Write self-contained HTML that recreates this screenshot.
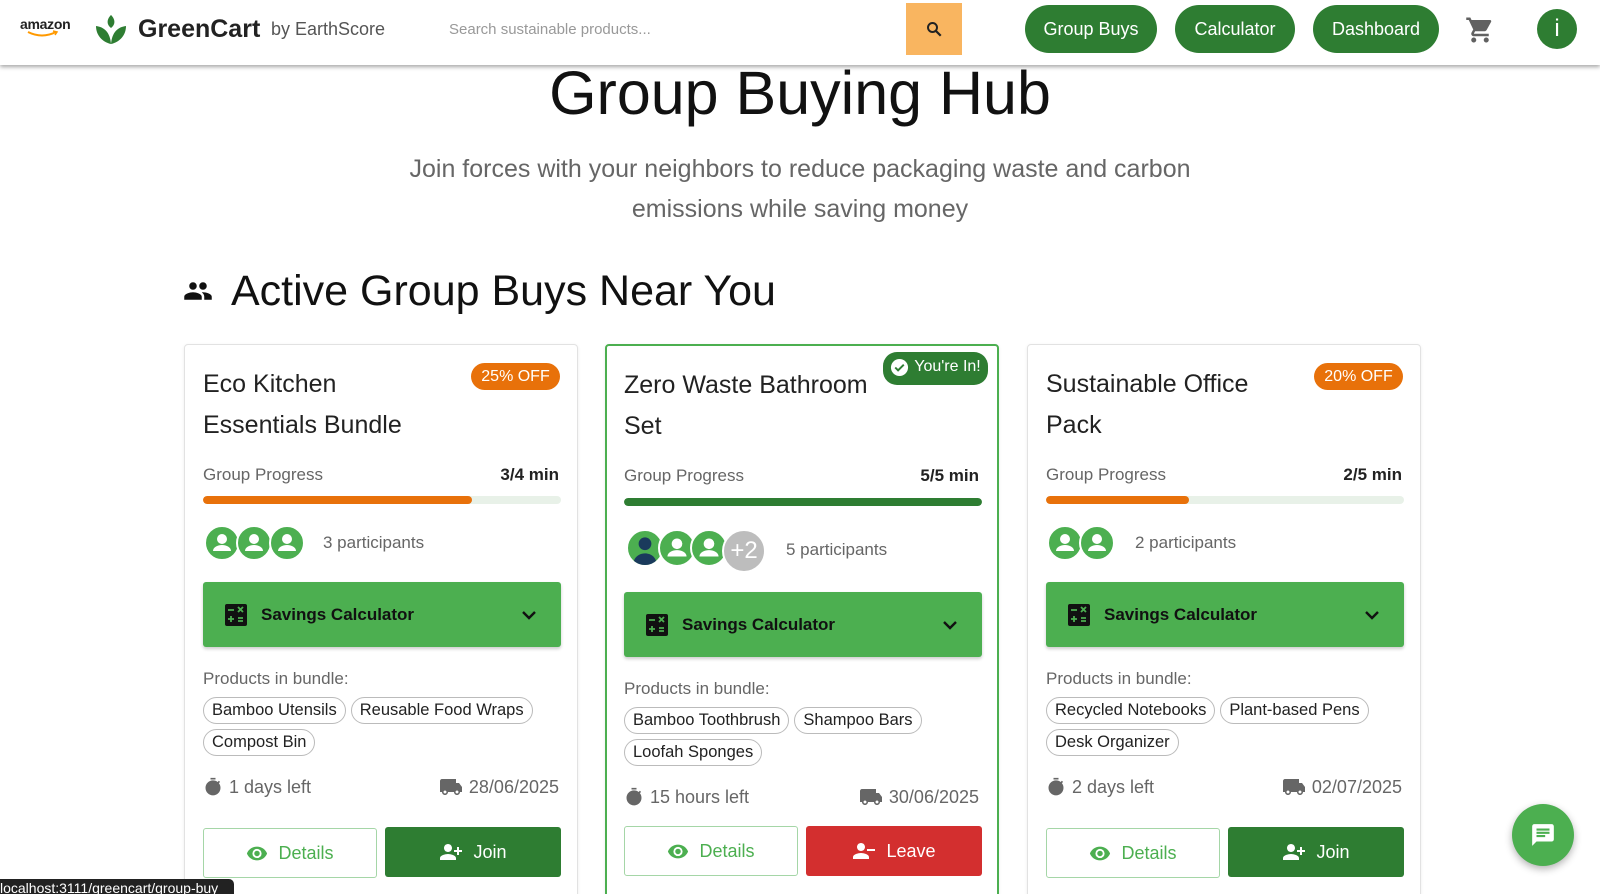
<!DOCTYPE html>
<html style="height:894px;overflow:hidden"><head><meta charset="utf-8"><style>
*{box-sizing:border-box;margin:0;padding:0}
body{width:1600px;height:894px;overflow:hidden;background:#fff;font-family:"Liberation Sans",Arial,sans-serif;color:#222;position:relative}
.a{position:absolute}
.nav{position:absolute;left:0;top:0;width:1600px;height:65px;background:#fff;box-shadow:0 2px 4px rgba(0,0,0,.35);z-index:5}
.nb{position:absolute;top:5px;height:48px;border-radius:24px;background:#2e7d32;color:#fff;font-size:18px;display:flex;align-items:center;justify-content:center}
.card{position:absolute;top:344px;width:394px;height:560px;border:1px solid #e2e2e2;border-radius:4px;background:#fff;box-shadow:0 1px 3px rgba(0,0,0,.08)}
.card.in{border:2px solid #4caf50}
.t{position:absolute;left:18px;top:19px;font-size:25px;line-height:41px;color:#222}
.badge{position:absolute;left:286px;top:18px;width:89px;height:27px;border-radius:14px;background:#e8710a;color:#fff;font-size:16px;display:flex;align-items:center;justify-content:center}
.gp{position:absolute;left:18px;right:18px;font-size:17px;color:#666;display:flex;justify-content:space-between}
.gp b{color:#222;font-size:17px}
.bar{position:absolute;left:18px;width:358px;height:8px;border-radius:4px;background:#e8f1e8;overflow:hidden}
.bar i{display:block;height:8px;border-radius:4px}
.av{position:absolute;width:36px;height:36px;border-radius:50%;background:#4caf50;border:2px solid #fff;overflow:hidden}
.pt{position:absolute;left:138px;font-size:17px;color:#666}
.sc{position:absolute;left:18px;width:358px;height:65px;background:#4caf50;border-radius:3px;box-shadow:0 2px 3px rgba(0,0,0,.2);font-weight:bold;font-size:17px;color:#111;display:flex;align-items:center}
.pb{position:absolute;left:18px;font-size:17px;color:#666}
.chips{position:absolute;left:18px;width:360px;display:flex;flex-wrap:wrap;gap:5px 5px}
.chip{height:27px;border:1px solid #bbb;border-radius:14px;padding:0 8px;font-size:16.5px;display:flex;align-items:center;color:#222}
.tl{position:absolute;left:18px;right:18px;font-size:18px;color:#666;display:flex;justify-content:space-between;align-items:center}
.tl span{display:flex;align-items:center;gap:6px}
.btn{position:absolute;height:50px;border-radius:3px;display:flex;align-items:center;justify-content:center;font-size:18px;gap:10px}
.det{left:18px;width:174px;border:1px solid #a5d6a7;color:#4caf50}
.join{left:200px;width:176px;background:#2e7d32;color:#fff}
</style></head><body>
<div class="nav">
  <div class="a" style="left:20px;top:16px;font-size:14px;font-weight:bold;color:#222;letter-spacing:-.3px">amazon</div>
  <svg class="a" style="left:26px;top:30px" width="34" height="8" viewBox="0 0 34 8"><path d="M2 2 Q16 9 30 2" stroke="#f90" stroke-width="2" fill="none"/><path d="M27 1 L31 2 L29 5" stroke="#f90" stroke-width="1.5" fill="none"/></svg>
  <svg class="a" style="left:94px;top:13px" width="34" height="32" viewBox="0 0 34 32"><path d="M17 2 C22 7 21 12 17 15 C13 12 12 7 17 2Z" fill="#2e7d32"/><path d="M17 31 C8 29 2 22 2 13 C10 14 16 19 17 31Z" fill="#2e7d32"/><path d="M17 31 C26 29 32 22 32 13 C24 14 18 19 17 31Z" fill="#2e7d32"/></svg>
  <div class="a" style="left:138px;top:15px;font-size:25px;font-weight:bold;color:#222">GreenCart</div>
  <div class="a" style="left:271px;top:19px;font-size:18px;color:#555">by EarthScore</div>
  <div class="a" style="left:449px;top:21px;font-size:15px;color:#999">Search sustainable products...</div>
  <div class="a" style="left:906px;top:3px;width:56px;height:52px;background:#f9b560;display:flex;align-items:center;justify-content:center">
    <svg width="18" height="18" viewBox="0 0 24 24"><circle cx="10" cy="10" r="6" stroke="#222" stroke-width="2.6" fill="none"/><path d="M14.5 14.5 L21 21" stroke="#222" stroke-width="3"/></svg></div>
  <div class="nb" style="left:1025px;width:132px">Group Buys</div>
  <div class="nb" style="left:1175px;width:120px">Calculator</div>
  <div class="nb" style="left:1313px;width:126px">Dashboard</div>
  <svg class="a" style="left:1465px;top:15px" width="30" height="30" viewBox="0 0 24 24"><path fill="#616161" d="M7 18c-1.1 0-2 .9-2 2s.9 2 2 2 2-.9 2-2-.9-2-2-2zM1 2v2h2l3.6 7.59-1.35 2.45c-.16.28-.25.61-.25.96 0 1.1.9 2 2 2h12v-2H7.42c-.14 0-.25-.11-.25-.25l.03-.12.9-1.63h7.45c.75 0 1.41-.41 1.75-1.03l3.58-6.49A1 1 0 0 0 20 4H5.21l-.94-2H1zm16 16c-1.1 0-2 .9-2 2s.9 2 2 2 2-.9 2-2-.9-2-2-2z"/></svg>
  <div class="a" style="left:1537px;top:9px;width:40px;height:40px;border-radius:50%;background:#2e7d32;color:#fff;font-size:24px;display:flex;align-items:center;justify-content:center">i</div>
</div>

<div class="a" style="left:0;width:1600px;top:58px;text-align:center;font-size:61px;color:#111">Group Buying Hub</div>
<div class="a" style="left:375px;width:850px;top:149px;text-align:center;font-size:25px;line-height:40px;color:#666">Join forces with your neighbors to reduce packaging waste and carbon emissions while saving money</div>

<svg class="a" style="left:183px;top:280px" width="30" height="22" viewBox="0 0 24 16"><path fill="#111" d="M16 7c1.66 0 2.99-1.34 2.99-3S17.66 1 16 1c-1.66 0-3 1.34-3 3s1.34 3 3 3zm-8 0c1.66 0 2.99-1.34 2.99-3S9.66 1 8 1C6.34 1 5 2.34 5 4s1.34 3 3 3zm0 2c-2.33 0-7 1.17-7 3.5V15h14v-2.5C15 10.17 10.33 9 8 9zm8 0c-.29 0-.62.02-.97.05 1.16.84 1.970 1.97 1.97 3.45V15h6v-2.5c0-2.33-4.67-3.5-7-3.5z"/></svg>
<div class="a" style="left:231px;top:267px;font-size:43px;color:#111">Active Group Buys Near You</div>

<svg width="0" height="0" style="position:absolute"><defs>
<symbol id="u" viewBox="0 0 32 32"><circle cx="16" cy="12" r="5" fill="#fff"/><path d="M7 24c0-4 5-6 9-6s9 2 9 6z" fill="#fff"/></symbol>
<symbol id="calc" viewBox="0 0 22 22"><rect width="22" height="22" rx="2" fill="#111"/><path d="M3 6h6M13 3l5 5M18 3l-5 5M3 15h6M6 12v6M13 14h5M13 17h5" stroke="#4caf50" stroke-width="1.8"/></symbol>
<symbol id="chev" viewBox="0 0 16 10"><path d="M2 2l6 6 6-6" stroke="#111" stroke-width="2.4" fill="none"/></symbol>
<symbol id="eye" viewBox="0 0 24 16"><path d="M12 1C7 1 2.7 4.1 1 8.5 2.7 12.9 7 16 12 16s9.3-3.1 11-7.5C21.3 4.1 17 1 12 1zm0 12.5a5 5 0 1 1 0-10 5 5 0 0 1 0 10zm0-8a3 3 0 1 0 0 6 3 3 0 0 0 0-6z" fill="#4caf50"/></symbol>
<symbol id="timer" viewBox="0 0 24 24"><path fill="#666" d="M9 1h6v2H9zM19.03 7.39l1.42-1.42c-.43-.51-.9-.99-1.41-1.41l-1.42 1.42A8.962 8.962 0 0 0 12 4c-4.97 0-9 4.03-9 9s4.02 9 9 9 9-4.03 9-9c0-2.12-.74-4.07-1.97-5.61z"/></symbol>
<symbol id="truck" viewBox="0 0 24 24"><path fill="#666" d="M20 8h-3V4H3c-1.1 0-2 .9-2 2v11h2c0 1.66 1.34 3 3 3s3-1.34 3-3h6c0 1.66 1.34 3 3 3s3-1.34 3-3h2v-5l-3-4zM6 18.5c-.83 0-1.5-.67-1.5-1.5s.67-1.5 1.5-1.5 1.5.67 1.5 1.5-.67 1.5-1.5 1.5zm12 0c-.83 0-1.5-.67-1.5-1.5s.67-1.5 1.5-1.5 1.5.67 1.5 1.5-.67 1.5-1.5 1.5z"/></symbol>
<symbol id="padd" viewBox="0 0 24 24"><g transform="translate(24 0) scale(-1 1)"><path fill="#fff" d="M15 12c2.21 0 4-1.79 4-4s-1.79-4-4-4-4 1.79-4 4 1.79 4 4 4zm-9-2V7H4v3H1v2h3v3h2v-3h3v-2H6zm9 4c-2.67 0-8 1.34-8 4v2h16v-2c0-2.66-5.33-4-8-4z"/></g></symbol>
<symbol id="prem" viewBox="0 0 24 24"><g transform="translate(24 0) scale(-1 1)"><path fill="#fff" d="M15 12c2.21 0 4-1.79 4-4s-1.79-4-4-4-4 1.79-4 4 1.79 4 4 4zM1 10v2h8v-2H1zm14 4c-2.67 0-8 1.34-8 4v2h16v-2c0-2.66-5.33-4-8-4z"/></g></symbol>
</defs></svg>

<!-- Card 1 -->
<div class="card" style="left:184px">
  <div class="t">Eco Kitchen<br>Essentials Bundle</div>
  <div class="badge">25% OFF</div>
  <div class="gp" style="top:120px"><span>Group Progress</span><b>3/4 min</b></div>
  <div class="bar" style="top:151px"><i style="width:75%;background:#e8710a"></i></div>
  <div class="av" style="left:19px;top:180px"><svg width="32" height="32"><use href="#u"/></svg></div>
  <div class="av" style="left:51px;top:180px"><svg width="32" height="32"><use href="#u"/></svg></div>
  <div class="av" style="left:84px;top:180px"><svg width="32" height="32"><use href="#u"/></svg></div>
  <div class="pt" style="top:188px">3 participants</div>
  <div class="sc" style="top:237px"><svg style="margin:0 14px 0 22px" width="22" height="22"><use href="#calc"/></svg>Savings Calculator<svg style="position:absolute;right:24px" width="16" height="10"><use href="#chev"/></svg></div>
  <div class="pb" style="top:324px">Products in bundle:</div>
  <div class="chips" style="top:352px"><div class="chip">Bamboo Utensils</div><div class="chip">Reusable Food Wraps</div><div class="chip">Compost Bin</div></div>
  <div class="tl" style="top:430px"><span><svg width="20" height="20"><use href="#timer"/></svg>1 days left</span><span><svg width="24" height="24"><use href="#truck"/></svg>28/06/2025</span></div>
  <div class="btn det" style="top:483px"><svg width="22" height="16"><use href="#eye"/></svg>Details</div>
  <div class="btn join" style="top:482px"><svg width="24" height="24"><use href="#padd"/></svg>Join</div>
</div>

<!-- Card 2 -->
<div class="card in" style="left:605px">
  <div class="t" style="left:17px;top:19px">Zero Waste Bathroom<br>Set</div>
  <div class="a" style="left:276px;top:6px;width:105px;height:33px;border-radius:14px;background:#2e7d32;color:#fff;font-size:16px;display:flex;align-items:flex-start;padding-top:6px;justify-content:center;gap:5px"><svg width="19" height="19" viewBox="0 0 20 20"><circle cx="10" cy="10" r="9" fill="#fff"/><path d="M5.5 10l3 3 6-6" stroke="#2e7d32" stroke-width="2" fill="none"/></svg>You're In!</div>
  <div class="gp" style="top:120px;left:17px"><span>Group Progress</span><b>5/5 min</b></div>
  <div class="bar" style="top:152px;left:17px"><i style="width:100%;background:#2e7d32"></i></div>
  <div class="av" style="left:19px;top:183px;width:38px;height:38px"><svg width="34" height="34" viewBox="0 0 32 32"><circle cx="16" cy="12" r="6" fill="#1a3a5c"/><path d="M5 32c0-7 5-11 11-11s11 4 11 11z" fill="#1a3a5c"/></svg></div>
  <div class="av" style="left:51px;top:183px;width:38px;height:38px"><svg width="34" height="34"><use href="#u"/></svg></div>
  <div class="av" style="left:83px;top:183px;width:38px;height:38px"><svg width="34" height="34"><use href="#u"/></svg></div>
  <div class="av" style="left:115px;top:183px;width:44px;height:44px;background:#bdbdbd;color:#fff;font-size:24px;display:flex;align-items:center;justify-content:center">+2</div>
  <div class="pt" style="top:194px;left:179px">5 participants</div>
  <div class="sc" style="top:246px;left:17px"><svg style="margin:0 14px 0 22px" width="22" height="22"><use href="#calc"/></svg>Savings Calculator<svg style="position:absolute;right:24px" width="16" height="10"><use href="#chev"/></svg></div>
  <div class="pb" style="top:333px;left:17px">Products in bundle:</div>
  <div class="chips" style="top:361px;left:17px"><div class="chip">Bamboo Toothbrush</div><div class="chip">Shampoo Bars</div><div class="chip">Loofah Sponges</div></div>
  <div class="tl" style="top:439px;left:17px"><span><svg width="20" height="20"><use href="#timer"/></svg>15 hours left</span><span><svg width="24" height="24"><use href="#truck"/></svg>30/06/2025</span></div>
  <div class="btn det" style="top:480px;left:17px"><svg width="22" height="16"><use href="#eye"/></svg>Details</div>
  <div class="btn join" style="top:480px;left:199px;background:#d32f2f"><svg width="24" height="24"><use href="#prem"/></svg>Leave</div>
</div>

<!-- Card 3 -->
<div class="card" style="left:1027px">
  <div class="t">Sustainable Office<br>Pack</div>
  <div class="badge">20% OFF</div>
  <div class="gp" style="top:120px"><span>Group Progress</span><b>2/5 min</b></div>
  <div class="bar" style="top:151px"><i style="width:40%;background:#e8710a"></i></div>
  <div class="av" style="left:19px;top:180px"><svg width="32" height="32"><use href="#u"/></svg></div>
  <div class="av" style="left:51px;top:180px"><svg width="32" height="32"><use href="#u"/></svg></div>
  <div class="pt" style="top:188px;left:107px">2 participants</div>
  <div class="sc" style="top:237px"><svg style="margin:0 14px 0 22px" width="22" height="22"><use href="#calc"/></svg>Savings Calculator<svg style="position:absolute;right:24px" width="16" height="10"><use href="#chev"/></svg></div>
  <div class="pb" style="top:324px">Products in bundle:</div>
  <div class="chips" style="top:352px"><div class="chip">Recycled Notebooks</div><div class="chip">Plant-based Pens</div><div class="chip">Desk Organizer</div></div>
  <div class="tl" style="top:430px"><span><svg width="20" height="20"><use href="#timer"/></svg>2 days left</span><span><svg width="24" height="24"><use href="#truck"/></svg>02/07/2025</span></div>
  <div class="btn det" style="top:483px"><svg width="22" height="16"><use href="#eye"/></svg>Details</div>
  <div class="btn join" style="top:482px"><svg width="24" height="24"><use href="#padd"/></svg>Join</div>
</div>

<div class="a" style="left:1512px;top:804px;width:62px;height:62px;border-radius:50%;background:#4caf50;box-shadow:0 3px 8px rgba(0,0,0,.3);display:flex;align-items:center;justify-content:center">
<svg width="26" height="26" viewBox="0 0 24 24"><path fill="#fff" d="M20 2H4c-1.1 0-2 .9-2 2v18l4-4h14c1.1 0 2-.9 2-2V4c0-1.1-.9-2-2-2zM6 9h12v2H6V9zm8 5H6v-2h8v2zm4-6H6V6h12v2z"/></svg></div>
<div class="a" style="left:0;top:879px;width:234px;height:20px;background:#222;border-radius:0 5px 0 0;color:#fff;font-size:14px;padding-top:1px;white-space:nowrap;overflow:hidden">localhost:3111/greencart/group-buy</div>
</body></html>
